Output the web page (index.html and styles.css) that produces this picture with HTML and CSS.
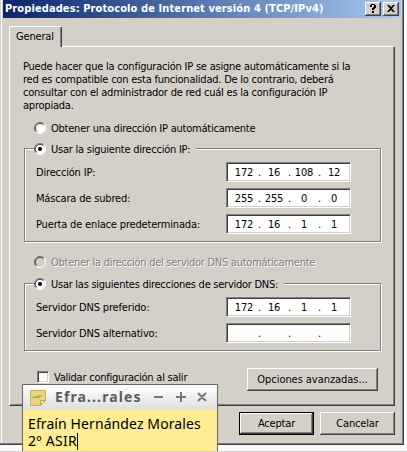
FILE: index.html
```
<!DOCTYPE html>
<html lang="es">
<head>
<meta charset="utf-8">
<title>Propiedades</title>
<link rel="stylesheet" href="styles.css">
</head>
<body>
<main class="dialog">
  <header class="titlebar">
    <h1 class="title">Propiedades: Protocolo de Internet versión 4 (TCP/IPv4)</h1>
    <button class="sysbtn"><svg width="16" height="14" viewBox="0 0 16 14"><path d="M5 5V3h1V2h4v1h1v3h-1v1H9v1H7V6h1V5h1V3H7v2zM7 9h2v2H7z"/></svg></button>
    <button class="sysbtn"><svg width="16" height="14" viewBox="0 0 16 14"><path d="M4 3h2l2 2 2-2h2L9 6.500 12 10h-2L8 8l-2 2H4l3-3.500z"/></svg></button>
  </header>
  <div class="tab"><span class="t general">General</span></div>
  <section class="panel">
    <p class="intro"><span class="t i1">Puede hacer que la configuración IP se asigne automáticamente si la</span><span class="t i2">red es compatible con esta funcionalidad. De lo contrario, deberá</span><span class="t i3">consultar con el administrador de red cuál es la configuración IP</span><span class="t i4">apropiada.</span></p>
    <label class="option"><svg class="radio" width="12" height="12" viewBox="0 0 12 12"><circle cx="6" cy="6" r="5" fill="#fff"/><path d="M2 10A5.500 5.500 0 0 1 10 2" class="dark"/><path d="M2.700 9.300A4.600 4.600 0 0 1 9.300 2.700" class="darker"/><path d="M10 2A5.500 5.500 0 0 1 2 10" class="light"/></svg><span class="t o1">Obtener una dirección IP automáticamente</span></label>
    <div class="group ipgroup">
      <label class="option legend"><svg class="radio" width="12" height="12" viewBox="0 0 12 12"><circle cx="6" cy="6" r="5" fill="#fff"/><path d="M2 10A5.500 5.500 0 0 1 10 2" class="dark"/><path d="M2.700 9.300A4.600 4.600 0 0 1 9.300 2.700" class="darker"/><path d="M10 2A5.500 5.500 0 0 1 2 10" class="light"/><circle cx="6" cy="6" r="2"/></svg><span class="t o2">Usar la siguiente dirección IP:</span></label>
      <div class="row"><span class="t r1">Dirección IP:</span><div class="ip"><b>172</b><i>.</i><b>16</b><i>.</i><b>108</b><i>.</i><b>12</b></div></div>
      <div class="row"><span class="t r2">Máscara de subred:</span><div class="ip"><b>255</b><i>.</i><b>255</b><i>.</i><b>0</b><i>.</i><b>0</b></div></div>
      <div class="row"><span class="t r3">Puerta de enlace predeterminada:</span><div class="ip"><b>172</b><i>.</i><b>16</b><i>.</i><b>1</b><i>.</i><b>1</b></div></div>
    </div>
    <label class="option disabled"><svg class="radio" width="12" height="12" viewBox="0 0 12 12"><path d="M2 10A5.500 5.500 0 0 1 10 2" class="dark"/><path d="M2.700 9.300A4.600 4.600 0 0 1 9.300 2.700" class="darker"/><path d="M10 2A5.500 5.500 0 0 1 2 10" class="light"/></svg><span class="t o3">Obtener la dirección del servidor DNS automáticamente</span></label>
    <div class="group dnsgroup">
      <label class="option legend"><svg class="radio" width="12" height="12" viewBox="0 0 12 12"><circle cx="6" cy="6" r="5" fill="#fff"/><path d="M2 10A5.500 5.500 0 0 1 10 2" class="dark"/><path d="M2.700 9.300A4.600 4.600 0 0 1 9.300 2.700" class="darker"/><path d="M10 2A5.500 5.500 0 0 1 2 10" class="light"/><circle cx="6" cy="6" r="2"/></svg><span class="t o4">Usar las siguientes direcciones de servidor DNS:</span></label>
      <div class="row"><span class="t r4">Servidor DNS preferido:</span><div class="ip"><b>172</b><i>.</i><b>16</b><i>.</i><b>1</b><i>.</i><b>1</b></div></div>
      <div class="row"><span class="t r5">Servidor DNS alternativo:</span><div class="ip"><b></b><i>.</i><b></b><i>.</i><b></b><i>.</i><b></b></div></div>
    </div>
    <div class="bottom">
      <label class="check"><span class="box"></span><span class="t c1">Validar configuración al salir</span></label>
      <button class="btn advanced"><span class="t b1">Opciones avanzadas...</span></button>
    </div>
  </section>
  <footer class="actions">
    <button class="btn default"><span class="t b2">Aceptar</span></button>
    <button class="btn"><span class="t b3">Cancelar</span></button>
  </footer>
</main>
<aside class="note">
  <header class="notebar">
    <svg width="16" height="16" viewBox="0 0 16 16"><path d="M.5.500h15v10l-5 5H.5z" fill="#e9d581" stroke="#c9b25c"/><path d="M10.500 15.500v-5h5z" fill="#f6e9a8" stroke="#b9a04a"/><path d="M2 8l2-1 1 1 1-2 1 2 2-3v3l2-2 2-1" fill="none" stroke="#a08a48" stroke-width=".8"/></svg>
    <h2 class="notetitle"><span>Efra</span><span class="dots">...</span><span>rales</span></h2>
    <svg class="controls" width="56" height="12" viewBox="0 0 56 12"><path d="M1 6h9M23 6h10M28 1v10M45 2l8 8M53 2l-8 8"/></svg>
  </header>
  <div class="notetext"><div class="n1">Efraín Hernández Morales</div><div class="n2">2º ASIR<span class="caret"></span></div></div>
</aside>
</body>
</html>
```
FILE: styles.css
```
* { box-sizing: border-box; }
body {
  margin: 0; width: 407px; height: 452px; overflow: hidden; position: relative;
  background: #fff; color: #000; border-bottom: 1px solid #d4d0c8;
  font-family: "DejaVu Sans Condensed", "DejaVu Sans", sans-serif;
  font-stretch: condensed; font-size: 11px; line-height: 13px;
}
html { background: #fff; }
button { font: inherit; color: inherit; padding: 0; margin: 0; border: 0; border-radius: 0; background: #d4d0c8; }
.t { white-space: nowrap; letter-spacing: -0.17px; }
.i1, .i2, .i3, .i4 { letter-spacing: -0.22px; }
.o1, .o2, .c1 { letter-spacing: -0.23px; }
.o3, .o4 { letter-spacing: -0.26px; }
.b1 { letter-spacing: -0.05px; }
.dialog {
  display: flex; flex-direction: column; width: 404px; height: 445px; background: #d4d0c8;
  border-right: 1px solid #404040; border-bottom: 1px solid #404040;
  box-shadow: inset -1px -1px #808080, inset 1px 0 #d4d0c8, inset 2px 0 #fff;
}
.titlebar {
  display: flex; align-items: center; height: 18px; margin: 0 2px 0 3px; padding: 0 2px;
  background: linear-gradient(90deg, #0a246a, #a6caf0);
}
.title { margin: 0; flex: 1; font-size: 11px; line-height: 18px; letter-spacing: .1px; color: #fff; white-space: nowrap; }
.sysbtn { width: 16px; height: 14px; margin-left: 2px; box-shadow: inset -1px -1px #404040, inset 1px 1px #fff, inset -2px -2px #808080; }
.sysbtn svg { display: block; }
.tab {
  width: 53px; height: 21px; margin: 8px 0 -1px 9px; padding: 3px 0 0 6px; position: relative;
  border: 1px solid #fff; border-right-color: #404040; border-bottom: 0; border-radius: 2px 2px 0 0;
  background: #d4d0c8; box-shadow: inset -1px 0 #808080;
}
.panel {
  height: 360px; margin: 0 8px 0 9px; width: 386px; padding: 13px 13px 0 14px;
  border: 1px solid #fff; border-right-color: #404040; border-bottom-color: #404040;
  box-shadow: inset -1px -1px #808080; display: flex; flex-direction: column;
}
.intro { margin: 0; display: flex; flex-direction: column; margin-left: -1px; height: 61px; }
.option { display: flex; align-items: center; gap: 5px; height: 13px; margin-left: 10px; }
.option .t { padding-top: 2px; }
.radio { flex: none; fill: #000; }
.radio path { fill: none; stroke-width: 1; }
.dark { stroke: #808080; }
.darker { stroke: #404040; }
.light { stroke: #fff; }
.group { border: 1px solid #808080; box-shadow: 1px 1px #fff, inset 1px 1px #fff; width: 357px; padding: 0 29px 0 11px; display: flex; flex-direction: column; }
.ipgroup { height: 94px; margin-top: 14px; }
.dnsgroup { height: 68px; margin-top: 15px; }
.legend { align-self: flex-start; margin: -7px 0 7px -2px; padding-right: 6px; background: #d4d0c8; flex: none; }
.row { display: flex; align-items: center; justify-content: space-between; height: 20px; margin-bottom: 6px; flex: none; }
.ip {
  width: 125px; height: 20px; background: #fff; display: grid;
  grid-template-columns: 28px 2px 28px 2px 28px 2px 28px; padding: 3px 0 0 3px;
  border: 1px solid #808080; border-right-color: #fff; border-bottom-color: #fff;
  box-shadow: inset 1px 1px #404040, inset -1px -1px #d4d0c8;
}
.ip b, .ip i { font-weight: 400; font-style: normal; text-align: center; line-height: 13px; letter-spacing: -.2px; }
.disabled { margin-top: 13px; color: #808080; text-shadow: 1px 1px #fff; }
.bottom { display: flex; justify-content: space-between; margin-top: 17px; padding: 0 3px 0 13px; }
.check { display: flex; gap: 5px; margin-top: 3px; height: 13px; }
.box { width: 12px; height: 12px; background: #fff; border: 1px solid #808080; border-right-color: #fff; border-bottom-color: #fff; box-shadow: inset 1px 1px #404040, inset -1px -1px #d4d0c8; }
.btn { height: 23px; width: 75px; box-shadow: inset -1px -1px #404040, inset 1px 1px #fff, inset -2px -2px #808080; }
.advanced { width: 131px; }
.default { border: 1px solid #000; }
.actions { display: flex; justify-content: flex-end; gap: 6px; padding: 6px 8px 0 0; }
.note { position: absolute; left: 22px; top: 384px; width: 196px; height: 68px; border: 1px solid #666; border-bottom: 0; background: #ffec94; font-family: "Noto Sans", sans-serif; }
.notebar { display: flex; align-items: center; height: 25px; padding: 0 9px 0 7px; background: linear-gradient(#fff, #dedede); }
.notetitle { display: flex; margin: 0 0 0 9px; flex: 1; font-size: 14px; line-height: 24px; color: #5c5c5c; letter-spacing: 1.1px; position: relative; top: -1px; }
.controls { fill: none; stroke: #777; stroke-width: 2; margin-right: -1px; position: relative; top: -1px; }
.notetext { padding: 5px 0 0 5px; font-size: 14px; line-height: 17px; letter-spacing: .1px; white-space: nowrap; }
.n2 { letter-spacing: .3px; }
.caret { display: inline-block; width: 1px; height: 17px; background: #000; vertical-align: -4px; }
```
